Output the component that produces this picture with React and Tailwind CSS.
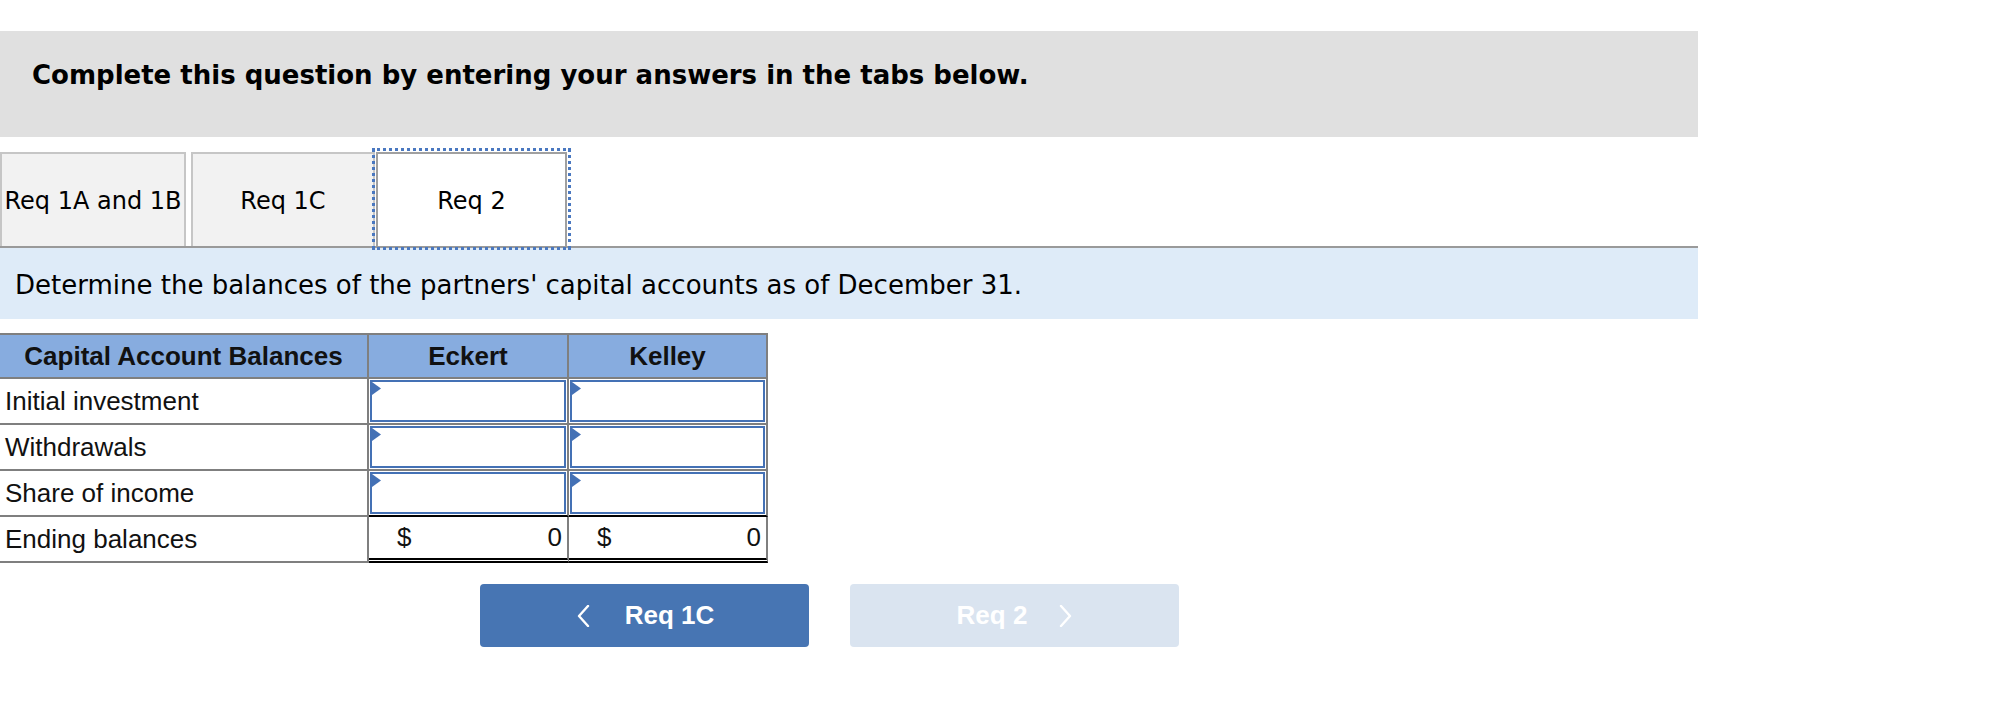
import React from 'react';

const verdana = { fontFamily: '"DejaVu Sans", Verdana, sans-serif' };
const arial = { fontFamily: '"Liberation Sans", Arial, Helvetica, sans-serif' };

const rows = ['Initial investment', 'Withdrawals', 'Share of income'];

const InputCell = ({ bottomDark }) => (
  <div
    className={`h-[46px] p-[1px] border-b-2 border-r-2 border-r-[#7f7f7f] ${
      bottomDark ? 'border-b-black' : 'border-b-[#7f7f7f]'
    }`}
  >
    <div className="relative w-full h-full border-2 border-[#4471b5] bg-white">
      <svg className="absolute left-0 top-0" width="9" height="13" viewBox="0 0 9 13">
        <polygon points="0,0 9,6.5 0,13" fill="#4471b5" />
      </svg>
    </div>
  </div>
);

const Chevron = ({ dir }) => (
  <svg width="13" height="22" viewBox="0 0 13 22" fill="none">
    <polyline
      points={dir === 'left' ? '11,1 2,11 11,21' : '2,1 11,11 2,21'}
      stroke="white"
      strokeWidth="2.4"
      strokeLinejoin="round"
      strokeLinecap="round"
    />
  </svg>
);

export default function App() {
  return (
    <div className="w-[2008px] h-[712px] bg-white overflow-hidden pt-[31px]">
      {/* instructions header */}
      <div className="w-[1698px] h-[106px] bg-[#e0e0e0] pl-[32px] pt-[29px]">
        <p className="text-[26px] leading-[30px] font-bold text-black" style={verdana}>
          Complete this question by entering your answers in the tabs below.
        </p>
      </div>

      {/* tabs */}
      <div className="w-[1698px] mt-[15px] flex border-b-2 border-[#9a9a9a]" style={verdana}>
        <div className="w-[186px] h-[94px] flex items-center justify-center pt-[2px] bg-[#f2f2f2] border-2 border-b-0 border-[#c6c6c6] text-[24px] whitespace-nowrap text-black">
          Req 1A and 1B
        </div>
        <div className="ml-[5px] w-[184px] h-[94px] flex items-center justify-center pt-[2px] bg-[#f2f2f2] border-2 border-b-0 border-[#c6c6c6] text-[24px] text-black">
          Req 1C
        </div>
        <div className="ml-[1px] w-[191px] h-[94px] flex items-center justify-center pt-[2px] bg-white border-2 border-b-0 border-[#a0a0a0] outline-[3px] outline-dotted outline-offset-[1px] outline-[#4a78c0] text-[24px] text-black">
          Req 2
        </div>
      </div>

      {/* task text */}
      <div className="w-[1698px] h-[71px] bg-[#deebf8] flex items-center pl-[15px] pt-[4px]">
        <p className="text-[26px] text-black" style={verdana}>
          Determine the balances of the partners' capital accounts as of December 31.
        </p>
      </div>

      {/* table */}
      <div className="mt-[14px] w-[768px] text-[26px] text-[#111]" style={arial}>
        <div className="grid grid-cols-[369px_200px_199px] h-[46px] bg-[#87acdf] border-t-2 border-b-2 border-[#7f7f7f] font-bold">
          <div className="flex items-center justify-center border-r-2 border-[#7f7f7f]">Capital Account Balances</div>
          <div className="flex items-center justify-center border-r-2 border-[#7f7f7f]">Eckert</div>
          <div className="flex items-center justify-center border-r-2 border-[#7f7f7f]">Kelley</div>
        </div>
        {rows.map((label, i) => (
          <div key={label} className="grid grid-cols-[369px_200px_199px]">
            <div className="h-[46px] flex items-center pl-[5px] border-b-2 border-r-2 border-[#7f7f7f]">{label}</div>
            <InputCell bottomDark={i === 2} />
            <InputCell bottomDark={i === 2} />
          </div>
        ))}
        <div className="grid grid-cols-[369px_200px_199px]">
          <div className="h-[46px] flex items-center pl-[5px] border-b-2 border-r-2 border-[#7f7f7f]">Ending balances</div>
          <div className="h-[46px] flex items-center justify-between pl-[28px] pr-[5px] border-r-2 border-r-[#7f7f7f] border-b-[5px] border-double border-b-black">
            <span>$</span>
            <span>0</span>
          </div>
          <div className="h-[46px] flex items-center justify-between pl-[28px] pr-[5px] border-r-2 border-r-[#7f7f7f] border-b-[5px] border-double border-b-black">
            <span>$</span>
            <span>0</span>
          </div>
        </div>
      </div>

      {/* navigation */}
      <div className="mt-[21px] ml-[480px] flex gap-[41px]" style={arial}>
        <button className="w-[329px] h-[63px] rounded-[4px] bg-[#4775b3] flex items-center justify-center gap-[35px] pl-[2px] text-white text-[26px] font-bold">
          <Chevron dir="left" />
          <span>Req 1C</span>
        </button>
        <button className="w-[329px] h-[63px] rounded-[4px] bg-[#dae4f0] flex items-center justify-center gap-[32px] text-white text-[26px] font-bold">
          <span>Req 2</span>
          <Chevron dir="right" />
        </button>
      </div>
    </div>
  );
}
